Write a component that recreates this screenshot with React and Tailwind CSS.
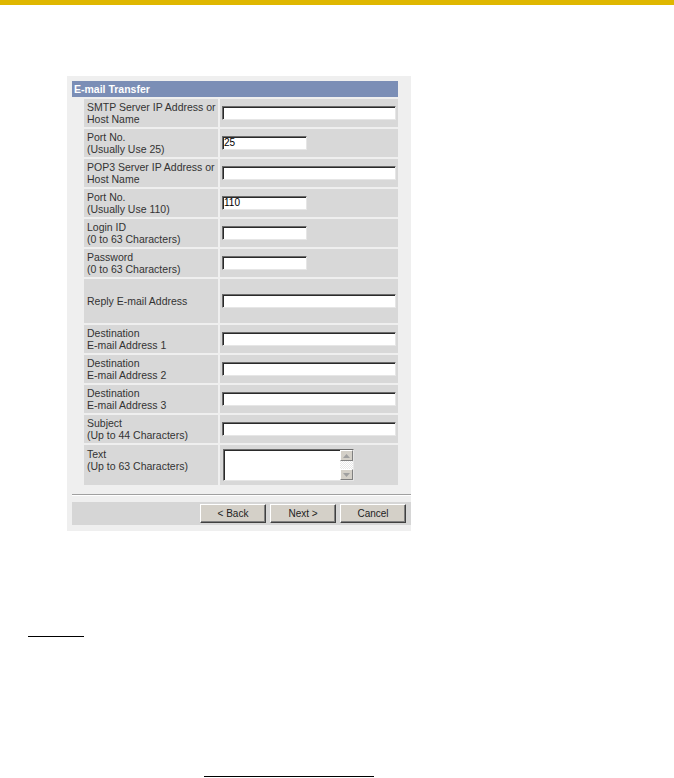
import React from "react";

const rows = [
  { label: ["SMTP Server IP Address or", "Host Name"], input: "long" },
  { label: ["Port No.", "(Usually Use 25)"], input: "short", value: "25" },
  { label: ["POP3 Server IP Address or", "Host Name"], input: "long" },
  { label: ["Port No.", "(Usually Use 110)"], input: "short", value: "110" },
  { label: ["Login ID", "(0 to 63 Characters)"], input: "short" },
  { label: ["Password", "(0 to 63 Characters)"], input: "short" },
  { label: ["Reply E-mail Address"], input: "long", tall: true },
  { label: ["Destination", "E-mail Address 1"], input: "long" },
  { label: ["Destination", "E-mail Address 2"], input: "long" },
  { label: ["Destination", "E-mail Address 3"], input: "long" },
  { label: ["Subject", "(Up to 44 Characters)"], input: "long" },
];

const TextBox = ({ wide, value }) => (
  <div
    className={`h-[14px] ${wide ? "w-[174px]" : "w-[85px]"} bg-white border-t border-l border-t-[#6b6b6b] border-l-[#6b6b6b] border-r border-b border-r-[#e6e6e6] border-b-[#e6e6e6] shadow-[inset_1px_1px_0_#2a2a2a] text-[10px] leading-[12px] text-black pl-[1px]`}
  >
    {value}
  </div>
);

const Arrow = ({ up }) => (
  <div className="w-[13px] h-[11px] bg-[#d4d0c8] border-t border-l border-white border-r border-b border-r-[#808080] border-b-[#808080] flex items-center justify-center">
    <svg width="7" height="4" viewBox="0 0 7 4">
      {up ? (
        <path d="M0 4 L3.5 0 L7 4 Z" fill="#a0a0a0" />
      ) : (
        <path d="M0 0 L3.5 4 L7 0 Z" fill="#a0a0a0" />
      )}
    </svg>
  </div>
);

const Button = ({ children }) => (
  <div className="w-[66px] h-[19px] bg-[#d4d0c8] border-t border-l border-t-white border-l-white border-r border-b border-r-[#404040] border-b-[#404040] shadow-[inset_-1px_-1px_0_#808080] flex items-center justify-center text-[10px] text-[#222]">
    {children}
  </div>
);

export default function App() {
  return (
    <div
      className="min-h-screen bg-white text-[#333]"
      style={{ fontFamily: '"Liberation Sans", Arial, sans-serif' }}
    >
      <div className="h-[5px] bg-[#dfb700]" />

      <div className="ml-[67px] mt-[71px] w-[344px] bg-[#efefef] pt-[5px] pb-[6px] pl-[5px]">
        <div className="w-[326px] h-[16px] bg-[#7b8eb6] text-white font-bold text-[10.5px] leading-[16px] pl-[2px]">
          E-mail Transfer
        </div>

        <div className="ml-[12px] w-[314px] mt-[2px] flex flex-col gap-[2px]">
          {rows.map((r, i) => (
            <div key={i} className={`flex gap-[2px] ${r.tall ? "h-[44px]" : "h-[28px]"}`}>
              <div className="w-[134px] bg-[#d8d8d8] pl-[3px] flex flex-col justify-center text-[10.5px] leading-[12px]">
                {r.label.map((l) => (
                  <div key={l}>{l}</div>
                ))}
              </div>
              <div className="flex-1 bg-[#d8d8d8] pl-[2px] flex items-center">
                <TextBox wide={r.input === "long"} value={r.value} />
              </div>
            </div>
          ))}

          <div className="flex gap-[2px] h-[40px]">
            <div className="w-[134px] bg-[#d8d8d8] pl-[3px] pt-[3px] text-[10.5px] leading-[12px]">
              <div>Text</div>
              <div>(Up to 63 Characters)</div>
            </div>
            <div className="flex-1 bg-[#d8d8d8] pl-[3px] flex items-center">
              <div className="w-[131px] h-[32px] bg-white border-t border-l border-t-[#6b6b6b] border-l-[#6b6b6b] border-r border-b border-r-[#e6e6e6] border-b-[#e6e6e6] shadow-[inset_1px_1px_0_#2a2a2a] flex justify-end">
                <div className="w-[13px] flex flex-col justify-between bg-[repeating-conic-gradient(#e8e8e8_0_25%,#ffffff_0_50%)] bg-[length:2px_2px]">
                  <Arrow up />
                  <Arrow />
                </div>
              </div>
            </div>
          </div>
        </div>

        <div className="mt-[9px] h-[2px] border-t border-t-[#a0a0a0] border-b border-b-white" />

        <div className="mt-[6px] h-[23px] bg-[#d6d6d6] flex items-center justify-end gap-[4px] pr-[5px]">
          <Button>&lt; Back</Button>
          <Button>Next &gt;</Button>
          <Button>Cancel</Button>
        </div>
      </div>

      <div className="mt-[105px] ml-[28px] w-[56px] h-px bg-black" />
      <div className="mt-[139px] ml-[204px] w-[170px] h-px bg-black" />
    </div>
  );
}
